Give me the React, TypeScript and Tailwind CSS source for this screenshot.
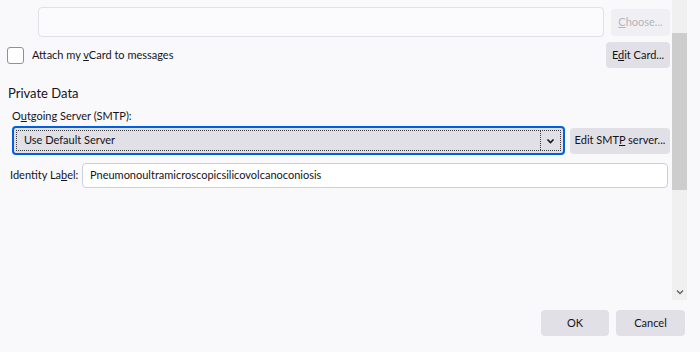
import React from "react";

const font = { fontFamily: 'Lato, "Noto Sans", sans-serif' };

function Btn({ children, className = "", disabled = false }: { children: React.ReactNode; className?: string; disabled?: boolean }) {
  return (
    <div
      className={`flex items-center justify-center whitespace-nowrap rounded-[4px] text-[11px] ${disabled ? "bg-[#f0f0f4] text-[#b5b5bb]" : "bg-[#e0e0e6] text-[#15141a]"} ${className}`}
    >
      {children}
    </div>
  );
}

export default function App() {
  return (
    <div className="relative w-[700px] h-[352px] bg-[#f9f9fb] overflow-hidden text-[#15141a]" style={font}>
      <div className="flex">
        <div className="w-[672px] shrink-0">
          {/* top row */}
          <div className="flex items-center pt-[7px] pl-[38px] pr-[2px] gap-[7px]">
            <div className="flex-1 h-[30px] rounded-[4px] border border-[#e0e0e6] bg-[#fbfbfd]" />
            <Btn disabled className="w-[59px] h-[27px]">
              <span><span className="underline">C</span>hoose...</span>
            </Btn>
          </div>
          {/* vcard row */}
          <div className="flex items-center mt-[5px] pl-[7px] pr-[2px]">
            <div className="w-[17px] h-[17px] rounded-[3px] border border-[#8f8f9d] bg-white" />
            <span className="ml-[8px] text-[11px] whitespace-nowrap">Attach my <span className="underline">v</span>Card to messages</span>
            <div className="flex-1" />
            <Btn className="w-[64px] h-[26px]">
              <span>E<span className="underline">d</span>it Card...</span>
            </Btn>
          </div>
          {/* Private data */}
          <div className="mt-[16px] pl-[8px] text-[13px] leading-[18px]">Private Data</div>
          <div className="mt-[7px] pl-[12px] text-[11px] leading-[14px] whitespace-nowrap">
            O<span className="underline">u</span>tgoing Server (SMTP):
          </div>
          <div className="flex items-center mt-[3px] pl-[12px] pr-[2px] gap-[5px]">
            <div className="flex-1 h-[29px] rounded-[4px] border-2 border-[#0061e0] bg-[#e0e0e6] p-[2px]">
              <div className="h-full flex items-center border border-dotted border-[#3a3a40]">
                <span className="flex-1 pl-[7px] text-[11px]">Use Default Server</span>
                <div className="h-full w-[20px] flex items-center justify-center border-l border-dotted border-[#3a3a40]">
                  <svg width="9" height="6" viewBox="0 0 9 6">
                    <path d="M1.5 1.5 L4.5 4.5 L7.5 1.5" fill="none" stroke="#15141a" strokeWidth="1.6" />
                  </svg>
                </div>
              </div>
            </div>
            <Btn className="w-[100px] h-[26px]">
              <span>Edit SMT<span className="underline">P</span> server...</span>
            </Btn>
          </div>
          {/* identity label */}
          <div className="flex items-center mt-[8px] pl-[10px] pr-[4px]">
            <span className="text-[11px] w-[72px] whitespace-nowrap">Identity La<span className="underline">b</span>el:</span>
            <div className="flex-1 h-[25px] rounded-[4px] border border-[#cfcfd8] bg-white flex items-center pl-[7px] text-[11px]">
              Pneumonoultramicroscopicsilicovolcanoconiosis
            </div>
          </div>
        </div>
        {/* scrollbar */}
        <div className="w-[15px] h-[300px] bg-[#f0f0f0] flex flex-col">
          <div className="h-[33px]" />
          <div className="h-[157px] bg-[#cdcdcd]" />
          <div className="flex-1" />
          <div className="h-[16px] flex items-center justify-center">
            <svg width="8" height="6" viewBox="0 0 8 6">
              <path d="M1 1.5 L4 4.5 L7 1.5" fill="none" stroke="#606060" strokeWidth="1.3" />
            </svg>
          </div>
        </div>
      </div>
      {/* footer */}
      <div className="absolute left-0 right-0 top-[310px] flex justify-end gap-[7px] pr-[15px]">
        <Btn className="w-[68px] h-[26px]">OK</Btn>
        <Btn className="w-[69px] h-[26px]">Cancel</Btn>
      </div>
    </div>
  );
}
